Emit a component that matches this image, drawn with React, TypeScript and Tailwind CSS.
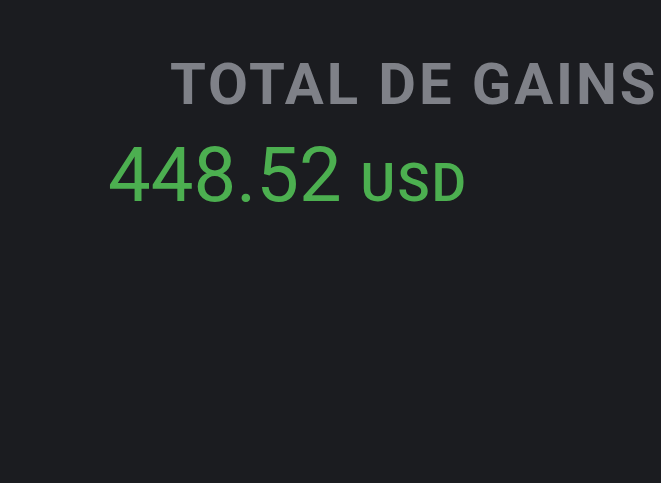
export default function App() {
  return (
    <div className="w-[661px] h-[483px] bg-[#1b1c20] overflow-hidden" style={{ fontFamily: "Roboto, 'Liberation Sans', sans-serif" }}>
      <div className="pt-[50px] pl-[170px] whitespace-nowrap text-[58px] font-bold tracking-[2.9px] text-[#7f8188] leading-[68px]">
        TOTAL DE GAINS
      </div>
      <div className="pl-[108px] mt-[17px] flex items-baseline whitespace-nowrap text-[#4caf50]">
        <span className="text-[76px] leading-[80px]">448.52</span>
        <span className="ml-[19px] text-[53px] font-medium tracking-[0.04em]">USD</span>
      </div>
    </div>
  );
}
